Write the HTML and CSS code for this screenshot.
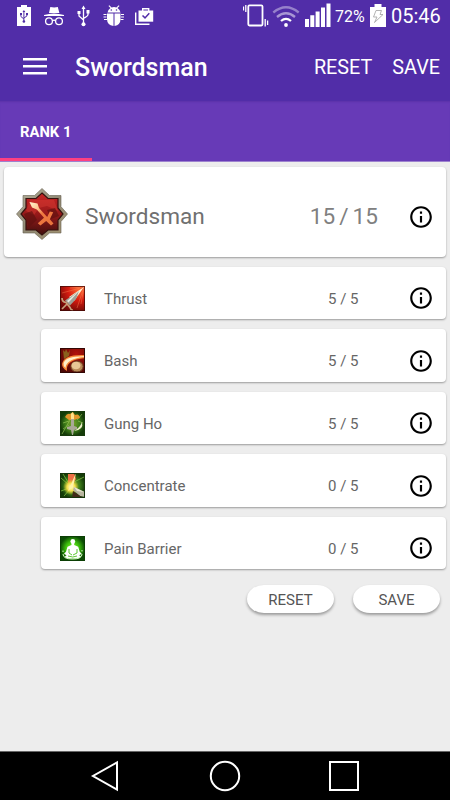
FILE: index.html
```html
<!DOCTYPE html>
<html lang="en">
<head>
<meta charset="utf-8">
<title>Swordsman</title>
<link rel="stylesheet" href="styles.css">
</head>
<body>
<svg class="defs" width="0" height="0" aria-hidden="true">
  <defs>
    <symbol id="info" viewBox="0 0 24 24"><path d="M11 17h2v-6h-2v6zm1-15C6.480 2 2 6.480 2 12s4.480 10 10 10 10-4.480 10-10S17.520 2 12 2zm0 18c-4.410 0-8-3.590-8-8s3.590-8 8-8 8 3.590 8 8-3.590 8-8 8zM11 9h2V7h-2v2z"/></symbol>
    <linearGradient id="gold" x1="0" y1="0" x2="1" y2="1"><stop offset="0" stop-color="#b5b09a"/><stop offset=".5" stop-color="#918a75"/><stop offset="1" stop-color="#a5946f"/></linearGradient>
    <linearGradient id="ruby" x1="0" y1="0" x2="0" y2="1"><stop offset="0" stop-color="#c72525"/><stop offset=".5" stop-color="#97191a"/><stop offset="1" stop-color="#42100e"/></linearGradient>
    <linearGradient id="blade" gradientUnits="userSpaceOnUse" x1="14" y1="14" x2="37" y2="38"><stop offset="0" stop-color="#fff8d0"/><stop offset=".3" stop-color="#ffc590"/><stop offset=".5" stop-color="#ef7840"/><stop offset="1" stop-color="#e8743c"/></linearGradient>
    <radialGradient id="red" cx=".75" cy=".15" r=".95"><stop offset="0" stop-color="#ff6a35"/><stop offset=".45" stop-color="#d61b10"/><stop offset="1" stop-color="#660805"/></radialGradient>
    <radialGradient id="dark" cx=".65" cy=".25" r=".85"><stop offset="0" stop-color="#b3130c"/><stop offset="1" stop-color="#4b0705"/></radialGradient>
    <radialGradient id="moss"><stop offset="0" stop-color="#7da62e"/><stop offset=".6" stop-color="#3b7a18"/><stop offset="1" stop-color="#143b08"/></radialGradient>
    <radialGradient id="lime"><stop offset="0" stop-color="#8cff30"/><stop offset=".55" stop-color="#3bbc0c"/><stop offset="1" stop-color="#0b4a04"/></radialGradient>
    <radialGradient id="glow"><stop offset="0" stop-color="#ffffd0"/><stop offset=".5" stop-color="#f5e04a"/><stop offset="1" stop-color="#d5c52c" stop-opacity="0"/></radialGradient>
  </defs>
</svg>
<div class="screen">
  <div class="status">
    <svg class="s-batt" viewBox="17 4 14 23"><path fill="#fff" d="M17 7h4V5h6v2h4v19H17z"/><g fill="none" stroke="#4f2da5" stroke-width="1"><path d="M23.900 11v11M20.900 13.500v3l3 2.500M26.900 13.500v2.500l-3 2"/></g><path fill="#4f2da5" d="M22.500 12l1.400-2 1.400 2zM20 13h2v2h-2zM26 13h2v2h-2z"/><circle cx="23.900" cy="21.500" r="1.300" fill="#4f2da5"/></svg>
    <svg class="s-incog" viewBox="43 4 22 23"><path fill="#fff" d="M49 13l1.300-6q4 .8 7.500 0l1.600 6zM44 15q5-1.600 10-1.600T64 15v.9H44z"/><g fill="none" stroke="#fff" stroke-width="1.300"><circle cx="49" cy="21.200" r="3.400"/><circle cx="59" cy="21.200" r="3.400"/><path d="M52.400 20.600q1.600-1 3.200 0"/></g></svg>
    <svg class="s-usb" viewBox="77 4 14 23"><path fill="none" stroke="#fff" stroke-width="1.300" d="M83.500 8v16M79 12v4l4.500 4M88 12v2.500q0 1.500-4.500 4"/><path fill="#fff" d="M81.500 9l2-3.500 2 3.500zM77.500 11h3v3h-3zM86.500 10h3v3.500h-3z"/><circle cx="83.500" cy="24.300" r="2" fill="#fff"/></svg>
    <svg class="s-bug" viewBox="103 4 22 23"><path fill="#fff" d="M107.500 12.500q.5-3 3-4.500l-2-2 .8-.8 2.300 2.200q2.400-.7 4.800 0l2.300-2.200.8.800-2 2q2.500 1.500 3 4.500zM107 13.500h6.500V26q-6.500-1-6.500-7zM114.500 13.500h6V19q0 6-6 7z"/><path stroke="#fff" stroke-width="1" d="M103.500 14.500h3M103.500 17h3M104 19.500h3M121 14.500h3M121 17h3M120.500 19.500h3"/><circle cx="111.300" cy="10" r=".8" fill="#512da8"/><circle cx="116.500" cy="10" r=".8" fill="#512da8"/></svg>
    <svg class="s-bag" viewBox="135 4 19 23"><path fill="none" stroke="#fff" stroke-width="1.400" d="M135.700 12.500v11.800h13.800M142.700 11V8.700h6V11"/><path fill="#fff" d="M138.500 10.500h14.700v11.200h-14.700z"/><path fill="none" stroke="#512da8" stroke-width="1.500" d="M142.500 15.500l2.500 2.400 4.300-4.600"/></svg>
    <span class="grow"></span>
    <svg class="s-vib" viewBox="243 4 26 23"><g fill="none" stroke="#fff"><rect x="248.300" y="5.300" width="14.200" height="20.200" rx="1.200" stroke-width="1.800"/><path d="M245.800 5v7M243.500 6.500v4M265.200 19v7.500M267.600 20.500v4.500" stroke-width="1.300"/></g></svg>
    <svg class="s-wifi" viewBox="272 4 28 23"><g fill="none" stroke="#fff" stroke-width="2.300"><path opacity=".4" d="M273.300 12.500q12.700-10.500 25.400 0"/><path opacity=".5" d="M277 17q9-7.500 18 0"/><path d="M281 21q5-4.300 10 0"/></g><circle cx="286" cy="25" r="1.900" fill="#fff"/></svg>
    <svg class="s-sig" viewBox="305 3 26 24"><path fill="#fff" d="M305 19h4v8h-4zM310.300 15.200h4V27h-4zM315.600 11.500h4V27h-4zM321 7.500h4V27h-4zM326.500 3.500h4V27h-4z"/></svg>
    <span class="pct">72%</span>
    <svg class="s-charge" viewBox="370 4 16 23"><path fill="#fff" d="M370 7h4.500V4h7v3h4.500v20h-16z"/><path fill="none" stroke="#aaa" stroke-width=".9" d="M376 10.500h5.500l-1.500 4h3l-8.500 8 2.500-5.500h-3.500z"/></svg>
    <span class="clock">05:46</span>
  </div>
  <header class="appbar">
    <svg class="menu" viewBox="0 0 24 17"><path fill="#fff" d="M0 0h24v2.400H0zM0 7h24v2.400H0zM0 14h24v2.400H0z"/></svg>
    <h1 class="title">Swordsman</h1>
    <span class="action a-reset">RESET</span>
    <span class="action">SAVE</span>
  </header>
  <nav class="tabs"><span class="tab">RANK 1</span></nav>
  <main class="content">
    <section class="card class-card">
      <svg class="emblem" viewBox="0 0 52 52"><path fill="url(#gold)" stroke="#655e50" stroke-width=".6" d="M26 .5l7.500 7H45v11.200l6.500 7.300-6.500 7.500V45H33.500L26 51.500 18.500 45H7V33.500L.5 26 7 18.700V7.500h11.500z"/><path fill="url(#ruby)" stroke="#35120f" stroke-width="1.200" d="M26 5l6 5.500h10v9.500l5 6-5 6.200V42H32l-6 5-6-5H10v-9.800L5 26l5-6v-9.500h10z"/><path fill="#e04238" opacity=".4" d="M14 12h24l4 11-11-5-8 2-5 7-8-4z"/><path fill="#5d1110" opacity=".65" d="M8 26l8-3 5 9-8 7zM31 22l8-2 4 8-8 3z"/><path fill="url(#blade)" d="M13.500 14l8 1.500 1.500 4.500 8.200 9 2.600-5.500 3.400.8-3.400 7 3.700 4.200-2.500 2-4.800-4.500-5.800 4.500-2.600-2.200 6.200-5.500-7.200-8.300-4.800-2z"/></svg>
      <span class="name">Swordsman</span>
      <span class="score"><span>15</span><span>/</span><span>15</span></span>
      <svg class="info"><use href="#info"/></svg>
    </section>
    <div class="skills">
      <section class="card skill">
        <svg class="pic" viewBox="0 0 25 25"><path fill="url(#red)" d="M0 0h25v25H0z"/><path stroke="#ff9a60" stroke-width=".6" opacity=".6" d="M24 1L2 7M24 1L10 2M24 1l-3 17M24 1l-7 21"/><path fill="#fff2d0" d="M24 1L9 11l5 4z"/><path fill="#9da097" d="M19 5L5 14.500l5 5L16 13z"/><path fill="#e9e9df" d="M21 3L7 15l1.500 1.500z"/><path fill="none" stroke="#c5a17a" stroke-width="1.700" d="M2 12q0 4 4 4.500l4 5q1 3 3 2.500M7 18l-5 5"/><path fill="none" stroke="#3d0a06" stroke-width=".8" d="M.4.4h24.200v24.200H.4z"/></svg>
        <span class="name">Thrust</span><span class="score">5 / 5</span><svg class="info"><use href="#info"/></svg>
      </section>
      <section class="card skill">
        <svg class="pic" viewBox="0 0 25 25"><path fill="url(#dark)" d="M0 0h25v25H0z"/><path fill="#8a611d" d="M3 2l2 2 1-3 2 4 2-3-1 6-5 3z"/><path fill="#f78736" d="M25 7Q4 6 2 16q0 4 5 7-2-11 18-13z"/><path fill="#fff1c9" d="M24 8.300Q6 8 3.500 15q-.5 3 2 5Q6 11 24 9z"/><ellipse cx="17" cy="18.500" rx="6.200" ry="5.500" fill="#b98b58" stroke="#62341b"/><ellipse cx="16" cy="17.500" rx="4.500" ry="3.800" fill="#e8c896"/><path fill="none" stroke="#310704" d="M.5.5h24v24H.5z"/></svg>
        <span class="name">Bash</span><span class="score">5 / 5</span><svg class="info"><use href="#info"/></svg>
      </section>
      <section class="card skill">
        <svg class="pic" viewBox="0 0 25 25"><path fill="url(#moss)" d="M0 0h25v25H0z"/><path stroke="#a2cf60" opacity=".6" d="M2 23L10 9M3 12l6-2M22 3l-5 6M3 18l6-4M18 10l5 2"/><path fill="#e3962b" d="M5 6q2-4 5-3l3-2 2 3q4-2 5 3l-6 2H9z"/><path fill="#ffe189" d="M11 3l1.500-2L14 4v6h-3z"/><path fill="#aaa898" d="M11 8h3v7l3 1v2l-3 1-1 5h-1l-1-5-4-1v-2l4-1z"/><path fill="#eeeecb" d="M22 11q2 8-8 9 6-3 8-9z"/><path fill="none" stroke="#173a0c" d="M.5.5h24v24H.5z"/></svg>
        <span class="name">Gung Ho</span><span class="score">5 / 5</span><svg class="info"><use href="#info"/></svg>
      </section>
      <section class="card skill">
        <svg class="pic" viewBox="0 0 25 25"><path fill="url(#moss)" d="M0 0h25v25H0z"/><path stroke="#8fca48" opacity=".7" d="M1 5l8 7M1 18l8-3M14 9l10-5M4 23l6-7M3 1l5 8"/><path fill="#ed7045" d="M8 0h6l2 6-6 10-2-5z"/><circle cx="11" cy="14" r="8" fill="url(#glow)"/><path fill="#fff3a6" d="M16 0l-3 14-5 4z"/><path fill="#b9b6a0" d="M14 14l11 5v5l-5-1-7-6z"/><path fill="#e8e7cf" d="M14 14l10 5-7-1z"/><path fill="#422a18" d="M13 18l10 7H12z"/><path fill="none" stroke="#17330b" d="M.5.5h24v24H.5z"/></svg>
        <span class="name">Concentrate</span><span class="score">0 / 5</span><svg class="info"><use href="#info"/></svg>
      </section>
      <section class="card skill">
        <svg class="pic" viewBox="0 0 25 25"><path fill="url(#lime)" d="M0 0h25v25H0z"/><circle cx="12.800" cy="5.500" r="2.400" fill="#fff"/><path fill="#fff" d="M11.500 7h2.700v2l4 1.800 1.500 5 2 2-2.500 1.500 2 1.500-3 1.700H7.500L4.500 21l2-1.700L4 17.800l2-2 1.500-5 4-1.800z"/><path fill="none" stroke="#4dc21e" stroke-width=".9" d="M9 13v4l3 2M17 13v4l-4 2M8 20q5 2 9 0"/><path fill="none" stroke="#d8ffc5" d="M3 18q0 5 9.500 5T22 18M3 14.500v1.500M22 14v1.500"/><path fill="none" stroke="#0b3a05" stroke-width=".8" d="M.4.4h24.200v24.200H.4z"/></svg>
        <span class="name">Pain Barrier</span><span class="score">0 / 5</span><svg class="info"><use href="#info"/></svg>
      </section>
    </div>
    <div class="buttons"><button class="pill">RESET</button><button class="pill">SAVE</button></div>
  </main>
  <footer class="navbar">
    <svg viewBox="0 0 32 32"><path d="M27 2.500v27L3 16z"/></svg>
    <svg viewBox="0 0 32 32"><circle cx="16" cy="16" r="14.200"/></svg>
    <svg viewBox="0 0 32 32"><rect x="2" y="2" width="28" height="28"/></svg>
  </footer>
</div>
</body>
</html>
```
FILE: styles.css
```css
* { box-sizing: border-box; }
body { margin: 0; font-family: Roboto, "Liberation Sans", sans-serif; background: #ededed; }
svg { display: block; flex: none; }
.defs { position: absolute; }
.screen { width: 450px; height: 800px; display: flex; flex-direction: column; overflow: hidden; }

.status { height: 32px; padding: 4px 9px 0 17px; display: flex; align-items: flex-start; background: #512da8; color: #fff; }
.status svg { height: 23px; }
.grow { flex: 1; }
.s-batt { width: 14px; margin-right: 12px; }
.s-incog { width: 22px; margin-right: 12px; }
.s-usb { width: 14px; margin-right: 12px; }
.s-bug { width: 22px; margin-right: 10px; }
.s-bag { width: 19px; }
.s-vib { width: 26px; margin-right: 3px; }
.s-wifi { width: 28px; margin-right: 5px; }
.status .s-sig { width: 26px; height: 24px; margin: -1px 4px 0 0; }
.pct { width: 35px; font-size: 16px; line-height: 25px; }
.s-charge { width: 16px; margin-right: 5px; }
.clock { width: 50px; font-size: 20px; line-height: 25px; white-space: nowrap; }

.appbar { height: 69px; padding: 0 10px 0 23px; display: flex; align-items: center; background: #512da8; color: #fff; }
.menu { width: 24px; height: 17px; margin-right: 28px; }
.title { margin: 1px 0 0; flex: 1; font-size: 25px; font-weight: 500; }
.action { font-size: 19.800px; margin-top: 1px; }
.a-reset { margin-right: 20px; }

.tabs { height: 61px; display: flex; background: #673ab7; border-bottom: 1px solid #9d82cf; box-shadow: inset 0 2px 2px -1px #5a32a9; }
.tab { width: 92px; padding: 2px 0 0 20px; line-height: 58px; font-size: 14.800px; font-weight: 700; color: #fff; border-bottom: 3px solid #ff4081; white-space: nowrap; }

.content { flex: 1; padding: 5px 4px 0; background: #ededed; color: #666; }
.card { display: flex; align-items: center; background: #fff; border-radius: 4px; box-shadow: 0 1px 2px rgba(0,0,0,.35); padding-right: 12px; }
.card .name { flex: 1; }
.info { width: 26px; height: 26px; fill: #000; }
.class-card { height: 90px; padding-left: 12px; font-size: 22.600px; }
.class-card .emblem { width: 52px; height: 52px; margin: 4px 17px 0 0; }
.class-card .name { padding-top: 9px; color: #707070; }
.class-card .score { display: flex; gap: 4px; color: #808080; margin-right: 30px; padding-top: 9px; }
.class-card .info { margin-top: 10px; }
.skills { margin: 9.800px 0 0 37px; display: grid; gap: 10px; }
.skill { height: 52.500px; padding: 10px 12px 0 19px; font-size: 15px; }
.skill .name, .skill .score { padding-top: 1px; }
.pic { width: 25px; height: 25px; margin-right: 19px; }
.skill .score { width: 31px; margin-right: 49px; white-space: nowrap; }

.buttons { margin: 15.500px 6px 0 0; display: flex; justify-content: flex-end; gap: 19px; }
.pill { width: 87px; height: 28px; border: 0; padding: 2px 0 0; background: #fff; border-radius: 17px / 14px; box-shadow: 0 2px 3px rgba(0,0,0,.35); color: #555; font: 15px Roboto, "Liberation Sans", sans-serif; }

.navbar { height: 49px; padding: 0 90px 1px; display: flex; align-items: center; justify-content: space-between; background: #000; border-top: 1px solid #666; }
.navbar svg { width: 32px; height: 32px; fill: none; stroke: #fff; stroke-width: 2; }
```
